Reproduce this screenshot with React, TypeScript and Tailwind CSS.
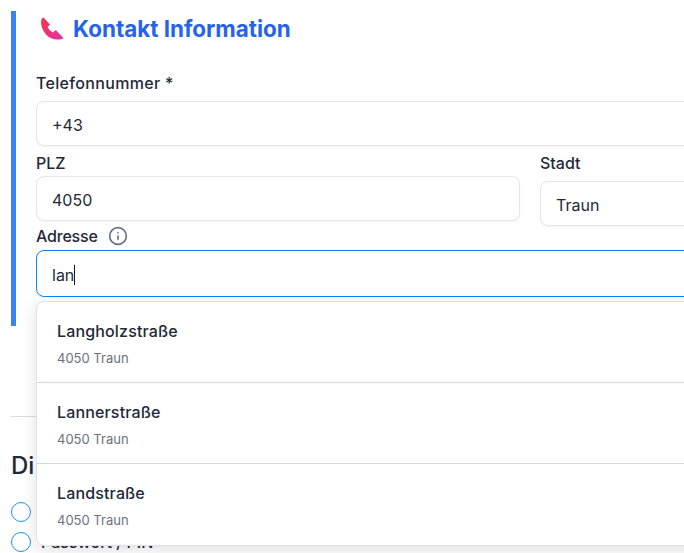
import React from 'react';

const font = { fontFamily: 'Inter' };

function PhoneIcon() {
  return (
    <svg viewBox="0 0 24 24" className="-mt-[1px] h-[24px] w-[24px] shrink-0">
      <defs>
        <linearGradient id="ph" x1="0" y1="0" x2="1" y2="1">
          <stop offset="0" stopColor="#f0384f" />
          <stop offset="1" stopColor="#e033a6" />
        </linearGradient>
      </defs>
      <path
        d="M3.5 0.5 L9.5 7 C9.9 7.5 9.8 8 9.4 8.4 L7.6 9.8 C8.6 12.4 10.6 14.4 13.2 15.4 L15 13.6 C15.4 13.2 15.9 13.2 16.3 13.6 L23 20.6 C23.4 21.2 23 21.8 22.2 22 C16 23.6 10 22 6 17.5 C2 13 0.6 8 1.2 3.5 C1.4 2 2.2 0.9 3.5 0.5 Z"
        fill="url(#ph)"
      />
    </svg>
  );
}

function Field({ value, className }: { value: string; className?: string }) {
  return (
    <div className={`flex h-[45px] items-center rounded-lg border border-[#e2e6ee] bg-white pt-[2px] pl-[15px] text-[16px] text-[#1f2937] shadow-[0_1px_2px_rgba(0,0,0,0.05)] ${className ?? ''}`}>
      {value}
    </div>
  );
}

function Suggestion({ street }: { street: string }) {
  return (
    <div className="h-[81px] border-b border-[#d1d9e4] px-5 pt-[17px] last:border-b-0">
      <div className="text-[16px] leading-[24px] font-medium tracking-[0.15px] text-[#1f2937]">{street}</div>
      <div className="mt-[5px] text-[13px] leading-[20px] text-[#6b7280]">4050 Traun</div>
    </div>
  );
}

function Radio() {
  return <span className="h-[20px] w-[20px] shrink-0 rounded-full border-[1.5px] border-[#1e90ff] bg-white" />;
}

export default function App() {
  return (
    <div className="relative h-[553px] w-[684px] overflow-hidden bg-white" style={font}>
      <div className="w-[1000px] pt-[11px] pl-[11px]">
        {/* Kontakt section */}
        <section className="h-[315px] border-l-[5px] border-[#3b82f6] pl-5">
          <h2 className="flex h-[36px] items-center gap-[9px] pl-[4px] text-[22.4px] font-bold text-[#2563eb]">
            <PhoneIcon />
            Kontakt Information
          </h2>
          <label className="mt-[24px] block h-[24px] text-[16px] leading-[24px] font-medium tracking-[0.33px] text-[#1f2937]">Telefonnummer *</label>
          <Field value="+43" className="mt-[6px]" />
          <div className="flex gap-5">
            <div className="w-[484px]">
              <label className="mt-[5px] block h-[24px] text-[16px] leading-[24px] font-medium text-[#1f2937]">PLZ</label>
              <Field value="4050" className="mt-[1px]" />
            </div>
            <div className="flex-1">
              <label className="mt-[5px] block h-[24px] text-[16px] leading-[24px] font-medium text-[#1f2937]">Stadt</label>
              <Field value="Traun" className="mt-[6px]" />
            </div>
          </div>
          <div className="-mt-[3px] flex h-[26px] items-center gap-[10px] text-[16px] font-medium tracking-[-0.2px] text-[#1f2937]">
            Adresse
            <svg viewBox="0 0 24 24" fill="none" stroke="#64748b" strokeWidth="2" strokeLinecap="round" className="h-[20px] w-[20px]">
              <circle cx="12" cy="12" r="10" />
              <path d="M12 16v-4M12 8h.01" />
            </svg>
          </div>
          <div className="mt-[1px] flex h-[47px] items-center rounded-lg border-[1.5px] border-[#0a84ff] bg-white pt-[2px] pl-[15px] text-[16px] text-[#1f2937]">
            lan<span className="h-[20px] w-px bg-[#111827]" />
          </div>
        </section>

        <hr className="mt-[90px] border-[#d5dde8]" />
        <h3 className="mt-[33px] text-[24px] leading-[32px] font-medium text-[#1f2937]">Di</h3>
        <div className="mt-[20px] flex flex-col gap-[10px]">
          <div className="flex h-[20px] items-center">
            <Radio />
          </div>
          <div className="flex h-[20px] items-center gap-[10px] text-[16px] font-medium text-[#1f2937]">
            <Radio />
            <span>Passwort / PIN</span>
          </div>
        </div>
      </div>

      {/* Address dropdown */}
      <div className="absolute top-[301px] left-[36px] w-[900px] rounded-lg border border-[#dde1e8] bg-white shadow-[0_4px_16px_rgba(0,0,0,0.12)]">
        <Suggestion street="Langholzstraße" />
        <Suggestion street="Lannerstraße" />
        <Suggestion street="Landstraße" />
      </div>
    </div>
  );
}
